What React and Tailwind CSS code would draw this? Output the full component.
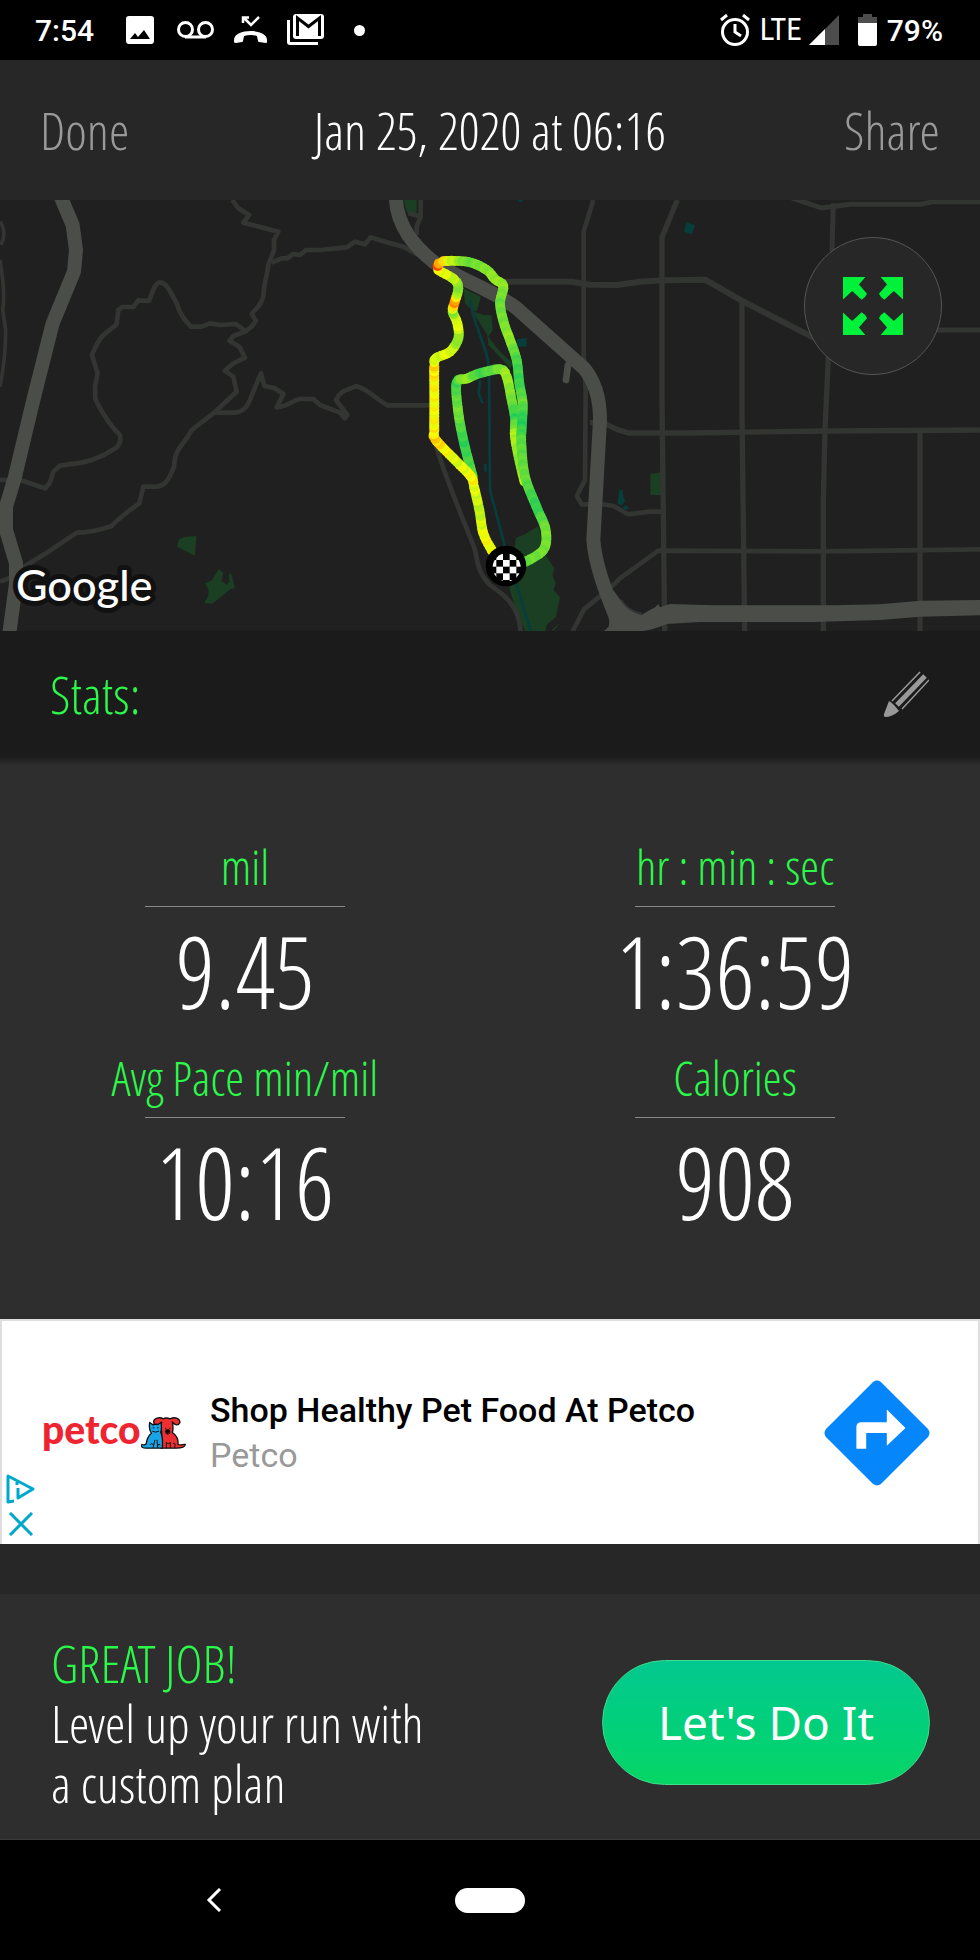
import { useMemo } from 'react';

const stats = [
  { label: 'mil', value: '9.45' },
  { label: 'hr : min : sec', value: '1:36:59' },
  { label: 'Avg Pace min/mil', value: '10:16' },
  { label: 'Calories', value: '908' },
];

// x, y and pace heat (0 = relaxed green, 1 = red)
const outerLoop = [
  [1476, 1052, 0.68], [1450, 1000, 0.7], [1438, 930, 0.55], [1422, 860, 0.66], [1413, 830, 0.72],
  [1365, 780, 0.62], [1306, 718, 0.8], [1303, 690, 0.72], [1303, 600, 0.69], [1303, 500, 0.75],
  [1308, 475, 0.6], [1350, 455, 0.66], [1375, 415, 0.4], [1372, 370, 0.7], [1358, 335, 0.4],
  [1363, 310, 0.95], [1375, 265, 0.35], [1362, 238, 0.55], [1315, 210, 0.7], [1313, 198, 1],
  [1330, 184, 0.78], [1405, 186, 0.3], [1460, 210, 0.4], [1485, 238, 0.45], [1510, 258, 0.45],
  [1500, 310, 0.3], [1512, 370, 0.35], [1530, 420, 0.45], [1550, 480, 0.2], [1558, 550, 0.12],
  [1568, 610, 0.3], [1566, 670, 0.05], [1564, 730, 0.25], [1575, 830, 0.3], [1610, 922, 0.1],
  [1637, 990, 0.35], [1630, 1050, 0.35], [1568, 1090, 0.3],
];

const innerLoop = [
  [1418, 830, 0.3], [1390, 720, 0.1], [1374, 630, 0.35], [1370, 548, 0.15], [1400, 536, 0.5],
  [1440, 520, 0.15], [1500, 508, 0.35], [1520, 530, 0.5], [1535, 600, 0.35], [1545, 655, 0.1],
  [1545, 710, 0.55], [1560, 790, 0.4], [1575, 850, 0.6],
];

const heatStops = [
  [0, [16, 200, 95]],
  [0.25, [88, 218, 62]],
  [0.5, [160, 236, 30]],
  [0.7, [246, 255, 4]],
  [0.82, [255, 190, 0]],
  [1, [255, 70, 0]],
];

function heatColor(value) {
  const heat = Math.min(1, Math.max(0, value));
  const upper = Math.max(1, heatStops.findIndex(([stop]) => heat <= stop));
  const [fromStop, from] = heatStops[upper - 1];
  const [toStop, to] = heatStops[upper];
  const ratio = (heat - fromStop) / (toStop - fromStop);
  const mixed = from.map((channel, index) => Math.round(channel + (to[index] - channel) * ratio));

  return `rgb(${mixed.join(',')})`;
}

// Catmull-Rom, so the track bends softly through its points
function spline(a, b, c, d, t) {
  return 0.5 * (2 * b + (c - a) * t + (2 * a - 5 * b + 4 * c - d) * t * t + (3 * b - a - 3 * c + d) * t * t * t);
}

function buildDots(points) {
  const dots = [];

  for (let i = 1; i < points.length; i += 1) {
    const before = points[Math.max(0, i - 2)];
    const from = points[i - 1];
    const to = points[i];
    const after = points[Math.min(points.length - 1, i + 1)];
    const steps = Math.max(1, Math.round(Math.hypot(to[0] - from[0], to[1] - from[1]) / 9));

    for (let step = 0; step < steps; step += 1) {
      const t = step / steps;
      const wobble = Math.sin(dots.length * 1.9) * 0.05;

      dots.push({
        x: spline(before[0], from[0], to[0], after[0], t),
        y: spline(before[1], from[1], to[1], after[1], t),
        color: heatColor(from[2] + (to[2] - from[2]) * t + wobble),
      });
    }
  }

  return dots;
}

function Route({ points }) {
  const dots = useMemo(() => buildDots(points), [points]);

  return dots.map((dot, index) => <circle key={index} cx={dot.x} cy={dot.y} r="15" fill={dot.color} />);
}

function FinishMarker() {
  const cells = [];

  for (let row = 0; row < 5; row += 1) {
    for (let col = 0; col < 5; col += 1) {
      if ((row + col) % 2 === 1) {
        cells.push([col, row]);
      }
    }
  }

  return (
    <g>
      <clipPath id="finish-clip">
        <circle cx="1520" cy="1102" r="42" />
      </clipPath>
      <circle cx="1518" cy="1098" r="61" fill="#000" />
      <g clipPath="url(#finish-clip)" fill="#fff">
        {cells.map(([col, row]) => (
          <rect key={`${col}-${row}`} x={1469 + col * 20} y={1060 + row * 20} width="20" height="20" />
        ))}
      </g>
    </g>
  );
}

function RunMap() {
  return (
    <svg aria-label="Route map" className="block h-auto w-full bg-[#202020]" role="img" viewBox="0 0 2940 1293">
      <g fill="#1a3f22">
        <path d="M531 1040 537 1018 556 1010 590 1008 584 1067Z" />
        <path d="M615 1150 634 1142 657 1107 670 1118 664 1142 680 1154 688 1145 686 1124 693 1118 705 1164 692 1166 637 1211 613 1210 625 1186 626 1170Z" />
        <path d="M1210 0H1250V38L1222 40Z" />
        <path d="M1390 265 1442 290 1432 330 1420 335 1450 345H1475L1478 390 1465 410 1500 455 1540 490 1530 505 1485 455 1465 435 1462 405 1415 330 1395 310Z" />
        <path d="M1548 1013 1575 1003 1615 978 1640 1070 1663 1105 1657 1125 1667 1150 1661 1170 1680 1192 1668 1250 1640 1275 1636 1293H1575L1545 1220 1528 1165Z" />
        <path d="M1655 1290 1678 1270 1670 1283 1660 1293Z" />
        <path d="M1951 822 1985 817V885H1951Z" />
      </g>
      <g fill="#063e3b">
        <path d="M2060 67 2085 76 2075 103 2052 95Z" />
        <path d="M1858 870H1868L1870 890 1876 903 1866 915 1853 913Z" />
        <path d="M1868 922 1880 915 1887 929 1872 928Z" />
        <path d="M1551 418 1580 414V440H1551Z" />
        <path d="M1552 0H1570L1563 8Z" />
      </g>
      <path d="M1410 300C1420 380 1465 440 1467 510L1470 870 1515 1040 1592 1293M1440 540 1436 580 1448 610M1456 792 1457 815" fill="none" stroke="#073d3c" strokeWidth="8" />

      <g fill="none" stroke="#333532" strokeLinejoin="round" strokeWidth="14">
        <path d="M0 65C15 85 15 115 2 135M0 180C10 240 15 290 8 330L17 390C17 460 8 520 0 560" strokeWidth="11" />
        <path d="M0 840H60L135 865 150 848 160 815 180 797 245 788C290 780 320 760 350 742 365 725 365 705 350 695 325 670 290 610 286 595L285 560 293 520 276 465C290 430 300 415 310 405L350 373 355 330 368 321H400L415 301 447 303C460 270 465 250 480 247 500 250 505 265 530 310 540 345 555 360 573 380H605L630 370 660 375 708 372 732 390" />
        <path d="M697 0 715 25 747 45 730 68 835 95 822 120V150L805 195C800 240 790 250 790 290 780 325 765 325 755 342L768 362 755 380 735 395 700 408 688 422 718 440 735 473 700 490 674 512 700 530 710 575 640 640 575 690C550 740 525 740 522 800 510 830 500 860 465 860H430L418 910C390 930 350 960 335 978 300 990 260 998 230 998L150 1052 65 1105" />
        <path d="M640 638H705C745 635 750 595 770 550L783 520 793 558 825 565 850 582 830 622C870 618 880 598 900 597H940L960 615 1020 638 1035 655 1042 645 1008 600C1020 570 1045 570 1068 558 1110 570 1130 600 1163 616H1303" />
        <path d="M815 188 845 175H862L880 162 900 165 918 150H960L1040 142 1065 125 1095 133 1112 112 1160 127 1210 140 1300 190" />
        <path d="M1262 0V50L1250 80V105M1225 40 1255 48" />
        <path d="M1303 720C1340 850 1400 980 1425 1050 1435 1110 1445 1130 1470 1155 1510 1185 1555 1210 1562 1293" />
        <path d="M0 1145 40 1130" />
        <g transform="translate(1620 0)">
          <path d="M-110 245H95L150 254 230 255 300 245 370 241 495 239 605 302 825 415" strokeWidth="18" />
          <path d="M160 0 131 95V460L137 570 135 840 110 888 125 913 185 912 220 918 265 943 330 935H370" />
          <path d="M412 0 366 112V600L374 1293M606 300V640L614 1293M865 470 855 690 850 900V1293M1140 695V1293" strokeWidth="16" />
          <path d="M750-8 845 24 930 13H1140L1180 5H1320M880 10 876 155M1190 390H1320" strokeWidth="15" />
          <path d="M150 668H190L230 688 265 699H450L860 693 1320 690" strokeWidth="16" />
          <path d="M98 1293 132 1228 215 1160 240 1135 355 1052 850 1054 1320 1048" />
        </g>
      </g>

      <g fill="none" stroke="#4b4d49" strokeLinejoin="round" strokeWidth="42">
        <path d="M182 -10 218 75 228 150 222 215 158 370 100 600 45 830 18 920V990L48 1090V1150L28 1300" />
        <path d="M1187 -10C1190 80 1245 140 1300 185 1380 240 1480 270 1550 325L1752 505C1790 550 1800 610 1800 660L1780 1020C1785 1090 1815 1170 1845 1245L1865 1300" />
        <path d="M1704 495 1698 540" strokeLinecap="round" strokeWidth="20" />
      </g>
      <g fill="#4b4d49">
        <path d="M1840 1170C1870 1215 1895 1240 1925 1244L1965 1222 1975 1212 1980 1222 2010 1212 2140 1216H2500L2640 1213 2760 1202 2940 1200V1246L2760 1250 2640 1260 2440 1266H2100L2000 1272C1970 1285 1950 1290 1930 1293H1812L1826 1280Z" />
      </g>
      <path d="M1864 1200Q1885 1235 1925 1240" fill="none" stroke="#343633" strokeWidth="5" />

      <Route points={innerLoop} />
      <Route points={outerLoop} />
      <FinishMarker />

      <text
        x="48"
        y="1202"
        className="font-['Lato'] text-[130px] font-medium"
        fill="#fff"
        paintOrder="stroke"
        stroke="#111"
        strokeLinejoin="round"
        strokeWidth="30"
      >
        Google
      </text>
    </svg>
  );
}

function StatusBar() {
  return (
    <div className="flex h-[60px] items-center justify-between bg-black pr-[37px] pl-[35px] font-['Roboto',sans-serif] text-[30px] font-medium text-white">
      <div className="flex items-center">
        <span className="w-[91px]">7:54</span>
        <svg className="h-7 w-7" fill="currentColor" viewBox="0 0 28 28">
          <path d="M3 0H25Q28 0 28 3V25Q28 28 25 28H3Q0 28 0 25V3Q0 0 3 0ZM4 23H24L18 14 12 21 9 17Z" fillRule="evenodd" />
        </svg>
        <svg className="ml-[23px] h-[18px] w-[37px]" fill="none" stroke="currentColor" strokeWidth="3" viewBox="0 0 37 18">
          <circle cx="8.500" cy="8.500" r="7" />
          <circle cx="28.500" cy="8.500" r="7" />
          <path d="M8 16H29" />
        </svg>
        <svg className="ml-5 h-7 w-[33px]" viewBox="0 0 33 28">
          <path d="M25 1 17 9 10 2M9 7V1.500H15" fill="none" stroke="currentColor" strokeWidth="2.500" />
          <path d="M0 24C0 12 33 12 33 24V26Q33 27 32 27L25 26Q24 26 24 25L23 20Q17 18 10 20L9 25Q9 26 8 26L2 27Q0 27 0 26Z" fill="currentColor" />
        </svg>
        <svg className="ml-5 h-8 w-[38px]" viewBox="0 0 38 32">
          <path d="M9 0H34Q37 0 37 3V22Q37 25 34 25H9Q6 25 6 22V3Q6 0 9 0Z" fill="currentColor" />
          <path d="M10.500 22V4L21.500 12.500 32.500 4V22" fill="none" stroke="#000" strokeWidth="3" />
          <path d="M1.500 6V28Q1.500 29.500 3 29.500H31" fill="none" stroke="currentColor" strokeWidth="3" />
        </svg>
        <span className="ml-[29px] h-[11px] w-[11px] rounded-full bg-white" />
      </div>

      <div className="flex items-center">
        <svg className="h-8 w-[30px]" fill="none" stroke="currentColor" strokeWidth="3" viewBox="0 0 30 32">
          <circle cx="15" cy="18" r="12.500" />
          <path d="M15 10V18L21 22M1 6 7 1M23 1 29 6" />
        </svg>
        <span className="ml-[10px] font-['Roboto_Condensed','Roboto',sans-serif] text-[31px] font-normal">LTE</span>
        <svg className="ml-[7px] h-[30px] w-[30px]" viewBox="0 0 30 30">
          <path d="M30 0V30H0Z" fill="#4d4d4d" />
          <path d="M16 14V30H0Z" fill="#fff" />
        </svg>
        <svg className="ml-[19px] h-8 w-[19px]" viewBox="0 0 19 32">
          <path d="M5 0H14V3H19V10H0V3H5Z" fill="#4d4d4d" />
          <path d="M0 9H19V30Q19 32 17 32H2Q0 32 0 30Z" fill="#fff" />
        </svg>
        <span className="ml-[10px]">79%</span>
      </div>
    </div>
  );
}

function ExpandIcon() {
  return (
    <svg className="h-[58px] w-[60px]" fill="#00f13a" viewBox="0 0 177 171">
      <path d="M0 0H66L47 22 71 49Q65 62 55 67L27 41 0 66Z" />
      <path d="M177 0H111L130 22 106 49Q112 62 122 67L150 41 177 66Z" />
      <path d="M0 171H66L47 149 71 122Q65 109 55 104L27 130 0 105Z" />
      <path d="M177 171H111L130 149 106 122Q112 109 122 104L150 130 177 105Z" />
    </svg>
  );
}

function PencilIcon() {
  return (
    <svg className="h-[46px] w-[46px]" viewBox="0 0 46 46">
      <g fill="none" stroke="#999">
        <path d="M37 1 9 30M46 9 19 38" strokeWidth="1.500" />
        <path d="M42 5 14 34" strokeWidth="5" />
      </g>
      <path d="M6 30Q8 31 11 34L16 40Q9 46 2 46Q0 45 1 43Z" fill="#999" />
    </svg>
  );
}

function PetcoLogo() {
  return (
    <div className="flex w-[146px] items-end pb-2">
      <span className="font-['Lato',sans-serif] text-[39px] leading-10 font-black text-[#ee2430]">petco</span>
      <svg className="h-8 w-[45px] shrink-0" viewBox="0 0 135 95">
        <g stroke="#111" strokeLinejoin="round" strokeWidth="4">
          <path d="M62 45C60 30 60 20 62 15 50 32 38 25 38 12 42 0 60 0 66 5Q75 0 88 5C100-2 116 3 117 16 110 30 98 20 94 14Q98 35 94 46C108 55 112 70 111 82 120 86 126 80 133 82 132 92 118 93 105 93H60Z" fill="#ee2f32" />
          <path d="M26 16 36 23Q43 20 51 22L60 16Q63 35 59 45C64 55 65 80 64 93H18C5 94-2 88 3 82 8 84 12 84 16 80 17 65 23 55 31 48 24 38 24 28 26 16Z" fill="#18a5e8" />
          <path d="M35 32H40M48 32H53M34 42Q44 48 54 42M74 32V36M86 32V36M73 47Q80 56 88 47M80 44V50M76 93V75Q82 85 88 75V93M36 92 42 68M50 92 48 68M27 83Q33 74 38 86M58 83Q53 77 51 86M101 92Q106 76 96 79" fill="none" strokeWidth="3" />
          <ellipse cx="80" cy="42" rx="6" ry="4" />
        </g>
      </svg>
    </div>
  );
}

function DirectionsIcon() {
  return (
    <svg className="h-[106px] w-[106px]" viewBox="0 0 108 108">
      <path d="M50 2Q54-1 58 2L106 50Q109 54 106 58L58 106Q54 109 50 106L2 58Q-1 54 2 50Z" fill="#0586fa" />
      <path d="M33 70V48Q33 43 38 43H64V30L83 49 64 67V54H43V70Z" fill="#fff" />
    </svg>
  );
}

function AdBanner() {
  return (
    <section aria-label="Advertisement" className="relative border-x-2 border-t-2 border-[#dedede] bg-white">
      <a className="flex h-[223px] items-center pr-12 pl-10 font-['Roboto',sans-serif] font-normal" href="#petco">
        <PetcoLogo />
        <span className="ml-[22px] flex-1 text-[34px] leading-[45px]">
          <span className="block font-medium text-black">Shop Healthy Pet Food At Petco</span>
          <span className="block text-[#999]">Petco</span>
        </span>
        <DirectionsIcon />
      </a>
      <div className="absolute bottom-2 left-[4px] flex flex-col gap-2 text-[#00a9cc]">
        <button aria-label="Ad choices" type="button">
          <svg className="block h-[30px] w-[29px]" fill="none" stroke="currentColor" strokeLinejoin="round" strokeWidth="3" viewBox="0 0 29 30">
            <path d="M8 27 2 28V2L27 15 12 24V14M11 11V8" />
          </svg>
        </button>
        <button aria-label="Close ad" type="button">
          <svg className="block h-[24px] w-[29px]" fill="none" stroke="currentColor" strokeWidth="3" viewBox="0 0 29 24">
            <path d="M4 1 26 23M26 1 4 23" />
          </svg>
        </button>
      </div>
    </section>
  );
}

function StatCell({ label, value }) {
  return (
    <div className="flex h-[211px] flex-col items-center">
      <dt className="flex h-[62px] w-full flex-col items-center justify-between whitespace-nowrap text-[48px] leading-[44px] text-[#2cf84a] after:h-px after:w-[200px] after:bg-[#8a8a8a]">
        {label}
      </dt>
      <dd className="mt-[14px] text-[99px] leading-[100px] text-white">{value}</dd>
    </div>
  );
}

export default function App() {
  return (
    <div className="min-h-screen bg-[#2e2e2e] font-['Open_Sans_Condensed_Light','Roboto_Condensed',sans-serif] font-light">
      <StatusBar />

      <header className="grid h-[140px] grid-cols-[1fr_auto_1fr] items-center bg-[#272727] px-10 text-[52px] text-[#999]">
        <button className="justify-self-start" type="button">Done</button>
        <h1 className="text-white">Jan 25, 2020 at 06:16</h1>
        <button className="justify-self-end" type="button">Share</button>
      </header>

      <div className="relative">
        <RunMap />
        <button
          aria-label="Expand map"
          className="absolute top-[37px] right-[38px] flex h-[138px] w-[138px] items-center justify-center rounded-full border border-[#555] bg-[#272727]"
          type="button"
        >
          <ExpandIcon />
        </button>
      </div>

      <div className="flex h-[126px] items-center justify-between bg-[#1b1b1b] pr-[51px] pl-[50px]">
        <h2 className="text-[52px] text-[#2cf84a]">Stats:</h2>
        <button aria-label="Edit stats" type="button">
          <PencilIcon />
        </button>
      </div>

      <main>
        <div className="h-2 bg-linear-to-b from-[#1b1b1b] to-[#2e2e2e]" />
        <dl className="grid grid-cols-2 pt-20 pb-[52px]">
          {stats.map((stat) => (
            <StatCell key={stat.label} label={stat.label} value={stat.value} />
          ))}
        </dl>

        <AdBanner />
        <div className="h-[50px] bg-[#272727]" />

        <section className="flex h-[246px] items-center justify-between border-b border-[#3a3a3a] pt-3 pr-[50px] pl-[51px]">
          <div className="text-[52px] leading-[60px] text-white">
            <h2 className="text-[#2cf84a]">GREAT JOB!</h2>
            <p>
              Level up your run with
              <br />a custom plan
            </p>
          </div>
          <button
            className="h-[125px] w-[328px] rounded-full border border-[#3fdc8e] bg-linear-to-b from-[#03c88f] to-[#06d664] font-['Noto_Sans',sans-serif] text-[46px] font-normal text-white"
            type="button"
          >
            Let&apos;s Do It
          </button>
        </section>
      </main>

      <nav className="grid h-[120px] grid-cols-[1fr_70px_1fr] items-center bg-black">
        <button aria-label="Back" className="mr-7 justify-self-center" type="button">
          <svg className="h-6 w-4" fill="none" stroke="#fff" strokeWidth="3" viewBox="0 0 16 24">
            <path d="M14 1 3 12 14 23" />
          </svg>
        </button>
        <button aria-label="Home" className="h-[25px] rounded-full bg-white" type="button" />
      </nav>
    </div>
  );
}
